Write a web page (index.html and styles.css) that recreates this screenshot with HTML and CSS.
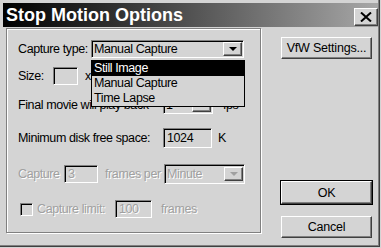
FILE: index.html
```html
<!DOCTYPE html>
<html lang="en">
<head>
  <meta charset="UTF-8" />
  <title>Stop Motion Options</title>
  <link rel="stylesheet" href="styles.css">
</head>
<body>
  <div class="window">
    <div class="titlebar">
      <span class="title">Stop Motion Options</span>
      <span class="close">
        <svg width="12" height="10" viewBox="0 0 12 10"><path d="M1 0.5 L11 9.5 M11 0.5 L1 9.5" stroke="#000" stroke-width="2" fill="none"/></svg>
      </span>
    </div>

    <div class="content">
      <div class="group">
        <div class="row">
          <span class="lbl w-type">Capture type:</span>
          <div class="combo w-type-box"><span>Manual Capture</span><i class="drop"></i></div>
        </div>

        <div class="row mt7">
          <span class="lbl w-size">Size:</span>
          <div class="box w-size-box"></div>
          <span class="gap7">x</span>
        </div>

        <div class="row mt9">
          <span class="lbl w-long">Final movie will play back</span>
          <div class="combo w-fps"><span>1</span><i class="drop"></i></div>
          <span class="gap10">fps</span>
        </div>

        <div class="row mt13">
          <span class="lbl w-long">Minimum disk free space:</span>
          <div class="box tall w-disk">1024</div>
          <span class="gap6">K</span>
        </div>

        <div class="row mt16 disabled">
          <span class="lbl w-cap">Capture</span>
          <div class="box w-cap-box">3</div>
          <span class="lbl gap7 w-per">frames per</span>
          <div class="combo tall w-minute"><span>Minute</span><i class="drop"></i></div>
        </div>

        <div class="row mt15 disabled">
          <span class="check"></span>
          <span class="lbl gap4 w-limit">Capture limit:</span>
          <div class="box w-limit-box">100</div>
          <span class="gap9">frames</span>
        </div>

        <ul class="droplist">
          <li class="selected">Still Image</li>
          <li>Manual Capture</li>
          <li>Time Lapse</li>
        </ul>
      </div>

      <div class="side">
        <button class="btn">VfW Settings...</button>
        <button class="btn default ok">OK</button>
        <button class="btn cancel">Cancel</button>
      </div>
    </div>
  </div>
</body>
</html>
```

FILE: styles.css
```css
* {
  box-sizing: border-box;
}
body {
  margin: 0;
  background: #d4d4d4;
  font-family: "Liberation Sans", sans-serif;
  font-size: 12.5px;
  letter-spacing: -0.4px;
  color: #000;
}
.window {
  width: 380px;
  height: 247px;
  padding: 3px 0 0 3px;
  border-right: 1px solid #404040;
  border-bottom: 1px solid #404040;
  box-shadow: inset -1px -1px 0 #808080;
}
.titlebar {
  height: 24px;
  width: 375px;
  background: linear-gradient(to right, #000 0%, #303030 30%, #a8a8a8 100%);
  display: flex;
  align-items: center;
  justify-content: space-between;
  padding: 0 0 0 3px;
}
.title {
  color: #fff;
  font-weight: bold;
  font-size: 18px;
  letter-spacing: 0;
}
.close {
  width: 24px;
  height: 18px;
  margin-top: 3px;
  background: #d4d4d4;
  border-top: 1px solid #fff;
  border-left: 1px solid #fff;
  border-right: 1px solid #404040;
  border-bottom: 1px solid #404040;
  box-shadow: inset -1px -1px 0 #808080;
  display: flex;
  align-items: center;
  justify-content: center;
}
.content {
  display: flex;
  margin-left: -3px;
}
.group {
  position: relative;
  width: 255px;
  height: 205px;
  margin: 1px 0 0 6px;
  padding: 10px 0 0 11px;
  border: 1px solid #808080;
  box-shadow: 1px 1px 0 #fff, inset 1px 1px 0 #fff;
}
.row {
  display: flex;
  align-items: center;
  height: 20px;
  white-space: nowrap;
}
.mt7 { margin-top: 7px; }
.mt9 { margin-top: 9px; }
.mt13 { margin-top: 13px; }
.mt15 { margin-top: 15px; }
.mt16 { margin-top: 16px; }
.gap4 { margin-left: 4px; }
.gap6 { margin-left: 6px; }
.gap7 { margin-left: 7px; }
.gap9 { margin-left: 9px; }
.gap10 { margin-left: 10px; }
.lbl {
  display: inline-block;
}
.w-type { width: 73px; }
.w-size { width: 35px; }
.w-long { width: 145px; }
.w-cap { width: 46px; }
.w-per { width: 59px; }
.w-limit { width: 78px; }

.box,
.combo {
  height: 18px;
  display: flex;
  align-items: center;
  padding: 0 1px 0 2px;
  border-top: 1px solid #808080;
  border-left: 1px solid #808080;
  border-right: 1px solid #fff;
  border-bottom: 1px solid #fff;
  box-shadow: inset 1px 1px 0 #000;
}
.box {
  padding-left: 3px;
}
.tall { height: 20px; }
.w-type-box { width: 153px; }
.w-size-box { width: 25px; }
.w-fps { width: 50px; }
.w-disk { width: 49px; }
.w-cap-box { width: 34px; }
.w-minute { width: 81px; }
.w-limit-box { width: 37px; }

.drop {
  margin-left: auto;
  width: 19px;
  height: 14px;
  background: #d4d4d4;
  border-top: 1px solid #fff;
  border-left: 1px solid #fff;
  border-right: 1px solid #404040;
  border-bottom: 1px solid #404040;
  box-shadow: inset -1px -1px 0 #808080;
  display: flex;
  align-items: center;
  justify-content: center;
}
.drop::after {
  content: "";
  border-left: 4px solid transparent;
  border-right: 4px solid transparent;
  border-top: 4px solid #000;
}
.disabled {
  color: #a0a0a0;
  text-shadow: 1px 1px 0 #fff;
}
.disabled .drop::after {
  border-top-color: #a0a0a0;
}
.check {
  width: 13px;
  height: 13px;
  margin-left: 2px;
  border-top: 1px solid #808080;
  border-left: 1px solid #808080;
  border-right: 1px solid #fff;
  border-bottom: 1px solid #fff;
  box-shadow: inset 1px 1px 0 #000;
}

.droplist {
  position: absolute;
  left: 84px;
  top: 31px;
  width: 154px;
  height: 47px;
  margin: 0;
  padding: 0;
  list-style: none;
  background: #d4d4d4;
  border: 1px solid #000;
}
.droplist li {
  height: 15px;
  line-height: 15px;
  padding-left: 2px;
}
.droplist .selected {
  background: #000;
  color: #fff;
}

.side {
  display: flex;
  flex-direction: column;
  margin-left: 20px;
  padding-top: 10px;
}
.btn {
  width: 91px;
  height: 22px;
  padding: 0;
  white-space: nowrap;
  font-family: inherit;
  font-size: 12.5px;
  letter-spacing: -0.2px;
  color: #000;
  background: #d4d4d4;
  border-top: 1px solid #fff;
  border-left: 1px solid #fff;
  border-right: 1px solid #404040;
  border-bottom: 1px solid #404040;
  box-shadow: inset -1px -1px 0 #808080;
}
.default {
  outline: 1px solid #000;
  outline-offset: 0;
}
.ok {
  margin-top: 122px;
  height: 23px;
}
.cancel {
  margin-top: 12px;
}
```
